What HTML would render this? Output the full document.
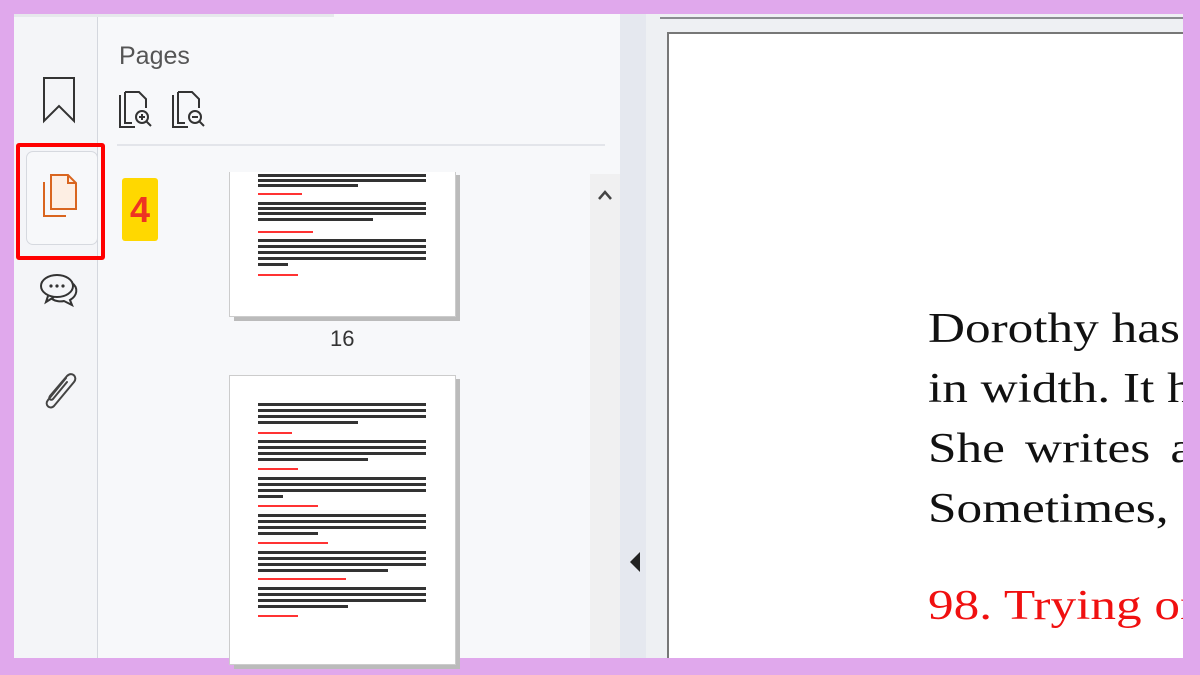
<!DOCTYPE html>
<html><head><meta charset="utf-8"><style>
*{margin:0;padding:0;box-sizing:border-box}
body{width:1200px;height:675px;background:#e0a8ec;position:relative;overflow:hidden;font-family:"Liberation Sans",sans-serif}
.a{position:absolute}
.l{position:absolute;height:3px;background:#333;left:28px}
.r{position:absolute;height:2px;background:#f33;left:28px}
</style></head><body>
<div class="a" style="left:14px;top:14px;width:1169px;height:644px;background:#f7f8fa"></div>
<div class="a" style="left:14px;top:14px;width:84px;height:644px;background:#f4f5f8;border-right:1px solid #d4d7de"></div>
<div class="a" style="left:14px;top:14px;width:320px;height:3px;background:#e6e8ec"></div>
<svg class="a" style="left:40px;top:75px" width="40" height="50" viewBox="0 0 40 50"><path d="M4 3 H34 V46 L19 31 L4 46 Z" fill="none" stroke="#333" stroke-width="2"/></svg>
<div class="a" style="left:26px;top:151px;width:72px;height:94px;background:#f7f8fa;border:1px solid #d6d9df;border-radius:7px"></div>
<svg class="a" style="left:40px;top:172px" width="40" height="48" viewBox="0 0 40 48"><path d="M4 10 V44 H26" fill="none" stroke="#d9651f" stroke-width="2"/><path d="M11 3 H28 L36 11 V37 H11 Z" fill="#fdeee3" stroke="#d9651f" stroke-width="2"/><path d="M28 3 V11 H36" fill="none" stroke="#d9651f" stroke-width="2"/></svg>
<div class="a" style="left:16px;top:143px;width:89px;height:117px;border:4px solid #f00;border-radius:3px"></div>
<svg class="a" style="left:38px;top:272px" width="42" height="40" viewBox="0 0 42 40"><ellipse cx="19" cy="14" rx="16" ry="11" fill="none" stroke="#333" stroke-width="2"/><path d="M10 24 L8 30 L16 25" fill="none" stroke="#333" stroke-width="2"/><path d="M34 11 C41 16 39 24 32 28 L34 33 L26 29 C22 30 17 29 14 27" fill="none" stroke="#333" stroke-width="2"/><circle cx="13" cy="14" r="1.6" fill="#333"/><circle cx="19" cy="14" r="1.6" fill="#333"/><circle cx="25" cy="14" r="1.6" fill="#333"/></svg>
<svg class="a" style="left:40px;top:368px" width="40" height="48" viewBox="0 0 40 48"><path d="M26 10 L8 32 C4 37 10 42 14 38 L34 14 C38 9 32 3 27 8 L10 28 C8 31 11 33 13 31 L27 14" fill="none" stroke="#444" stroke-width="2" stroke-linecap="round"/></svg>
<div class="a" style="left:119px;top:42px;font-size:25px;color:#555">Pages</div>
<svg class="a" style="left:117px;top:90px" width="40" height="40" viewBox="0 0 40 40"><path d="M3 5 V37 H18" fill="none" stroke="#333" stroke-width="2"/><path d="M8 2 H22 L29 9 V18 M8 2 V33 H15" fill="none" stroke="#333" stroke-width="2"/><circle cx="25" cy="27" r="6" fill="none" stroke="#333" stroke-width="2"/><path d="M29 31 L34 36 M22 27 H28 M25 24 V30" stroke="#333" stroke-width="2"/></svg>
<svg class="a" style="left:170px;top:90px" width="40" height="40" viewBox="0 0 40 40"><path d="M3 5 V37 H18" fill="none" stroke="#333" stroke-width="2"/><path d="M8 2 H22 L29 9 V18 M8 2 V33 H15" fill="none" stroke="#333" stroke-width="2"/><circle cx="25" cy="27" r="6" fill="none" stroke="#333" stroke-width="2"/><path d="M29 31 L34 36 M22 27 H28" stroke="#333" stroke-width="2"/></svg>
<div class="a" style="left:117px;top:144px;width:488px;height:2px;background:#e3e5ea"></div>
<div class="a" style="left:122px;top:178px;width:36px;height:63px;background:#ffd800;border-radius:3px;color:#ee3322;font-weight:bold;font-size:36px;text-align:center;line-height:63px">4</div>
<div class="a" style="left:234px;top:175px;width:226px;height:146px;background:#bbb"></div>
<div class="a" style="left:229px;top:172px;width:227px;height:145px;background:#fff;border:1px solid #ccc;border-top:none">
<div class="l" style="top:2px;width:168px"></div><div class="l" style="top:7px;width:168px"></div><div class="l" style="top:12px;width:100px"></div>
<div class="r" style="top:21px;width:44px"></div>
<div class="l" style="top:30px;width:168px"></div><div class="l" style="top:35px;width:168px"></div><div class="l" style="top:40px;width:168px"></div><div class="l" style="top:46px;width:115px"></div>
<div class="r" style="top:59px;width:55px"></div>
<div class="l" style="top:67px;width:168px"></div><div class="l" style="top:73px;width:168px"></div><div class="l" style="top:79px;width:168px"></div><div class="l" style="top:85px;width:168px"></div><div class="l" style="top:91px;width:30px"></div>
<div class="r" style="top:102px;width:40px"></div>
</div>
<div class="a" style="left:330px;top:326px;font-size:22px;color:#333">16</div>
<div class="a" style="left:234px;top:379px;width:226px;height:290px;background:#bbb"></div>
<div class="a" style="left:229px;top:375px;width:227px;height:290px;background:#fff;border:1px solid #ccc">
<div class="l" style="top:27px;width:168px"></div><div class="l" style="top:33px;width:168px"></div><div class="l" style="top:39px;width:168px"></div><div class="l" style="top:45px;width:100px"></div>
<div class="r" style="top:56px;width:34px"></div>
<div class="l" style="top:64px;width:168px"></div><div class="l" style="top:70px;width:168px"></div><div class="l" style="top:76px;width:168px"></div><div class="l" style="top:82px;width:110px"></div>
<div class="r" style="top:92px;width:40px"></div>
<div class="l" style="top:101px;width:168px"></div><div class="l" style="top:107px;width:168px"></div><div class="l" style="top:113px;width:168px"></div><div class="l" style="top:119px;width:25px"></div>
<div class="r" style="top:129px;width:60px"></div>
<div class="l" style="top:138px;width:168px"></div><div class="l" style="top:144px;width:168px"></div><div class="l" style="top:150px;width:168px"></div><div class="l" style="top:156px;width:60px"></div>
<div class="r" style="top:166px;width:70px"></div>
<div class="l" style="top:175px;width:168px"></div><div class="l" style="top:181px;width:168px"></div><div class="l" style="top:187px;width:168px"></div><div class="l" style="top:193px;width:130px"></div>
<div class="r" style="top:202px;width:88px"></div>
<div class="l" style="top:211px;width:168px"></div><div class="l" style="top:217px;width:168px"></div><div class="l" style="top:223px;width:168px"></div><div class="l" style="top:229px;width:90px"></div>
<div class="r" style="top:239px;width:40px"></div>
</div>
<div class="a" style="left:590px;top:174px;width:32px;height:484px;background:#f0f0f1"></div>
<svg class="a" style="left:596px;top:188px" width="18" height="14" viewBox="0 0 18 14"><path d="M3 11 L9 4 L15 11" fill="none" stroke="#444" stroke-width="2.5"/></svg>
<div class="a" style="left:620px;top:14px;width:26px;height:644px;background:#e5e8ef"></div>
<div class="a" style="left:646px;top:14px;width:537px;height:644px;background:#eef0f3"></div>
<div class="a" style="left:660px;top:17px;width:523px;height:2px;background:#8a8c90"></div>
<svg class="a" style="left:628px;top:550px" width="14" height="24" viewBox="0 0 14 24"><path d="M12 2 L2 12 L12 22 Z" fill="#222"/></svg>
<div class="a" style="left:667px;top:32px;width:516px;height:626px;background:#fff;border-left:2px solid #777;border-top:2px solid #777"></div>
<div class="a" style="left:928px;top:299px;width:255px;overflow:hidden;white-space:nowrap">
<div style="transform:scaleX(1.22);transform-origin:0 0;font-family:'Liberation Serif',serif;font-size:42px;line-height:60px;color:#111">
<div>Dorothy has</div><div>in width. It h</div><div style="word-spacing:6px">She writes a</div><div>Sometimes, s</div>
<div style="color:#f01010;margin-top:37px">98. Trying on</div>
</div></div>
</body></html>
